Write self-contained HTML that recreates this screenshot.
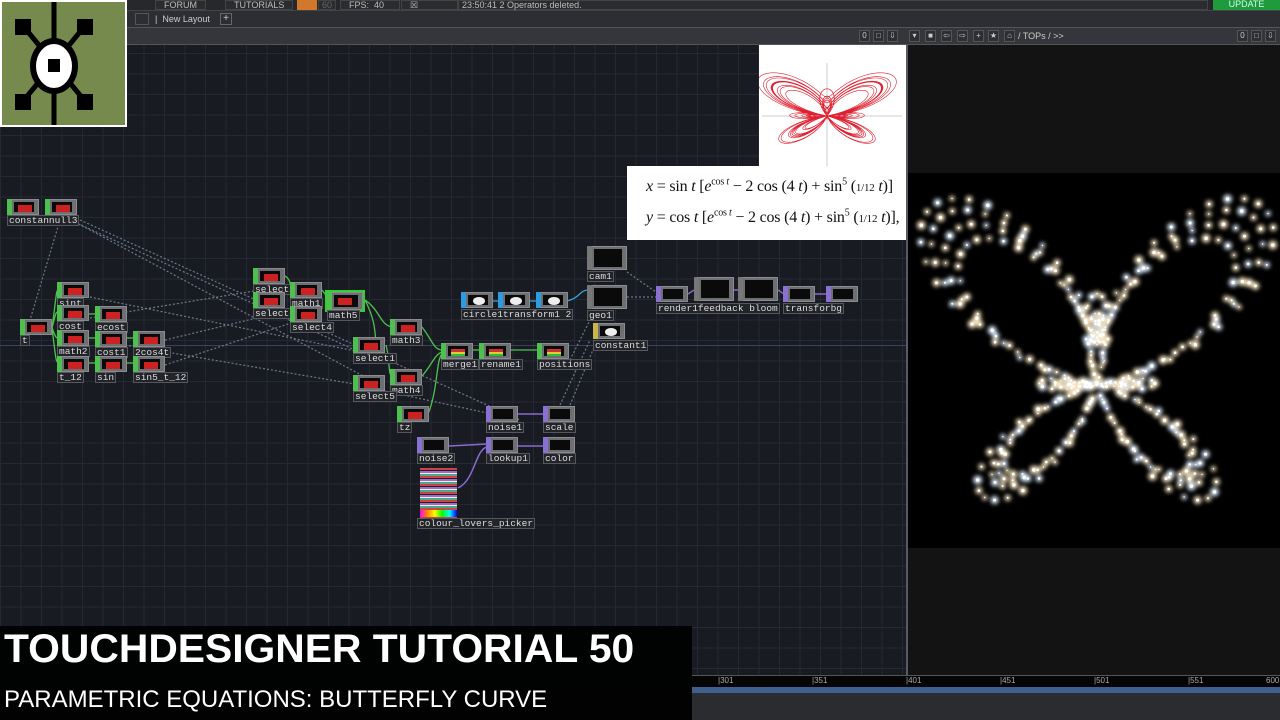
<!DOCTYPE html>
<html><head><meta charset="utf-8">
<style>
*{margin:0;padding:0;box-sizing:border-box}
body{width:1280px;height:720px;overflow:hidden;background:#1b1d24;font-family:"Liberation Sans",sans-serif;position:relative}
.abs{position:absolute}
#grid{left:0;top:45px;width:908px;height:640px;background-color:#191b22;
background-image:linear-gradient(#252932 1px,transparent 1px),linear-gradient(90deg,#252932 1px,transparent 1px);
background-size:20.5px 20.5px;background-position:0 8px}
.bar{left:0;width:1280px}
.tab{position:absolute;top:0;height:10px;color:#bbb;font-size:9px;line-height:9px;border:1px solid #444;padding:0 8px;background:#2a2c30}
.node{position:absolute;background:#6d6f73;border:1px solid #8a8c90}
.node .in{position:absolute;left:-1px;top:-1px;bottom:-1px;width:5px}
.node .v{position:absolute;left:6px;top:2px;right:4px;bottom:2px;background:#0a0a0a}
.lbl{position:absolute;font-family:"Liberation Mono",monospace;font-size:9.5px;color:#ddd;background:#222429;border:1px solid #55575c;line-height:9px;height:11px;padding:0 1px;white-space:nowrap}
.tb{position:absolute;top:30px;width:11px;height:12px;border:1px solid #555;background:#2c2e32;color:#ccc;font-size:8px;text-align:center;line-height:10px}
sup{line-height:0;font-size:10px}
</style></head><body>
<div class="abs bar" style="top:0;height:10px;background:#26282c"></div>
<div class="tab" style="left:155px">FORUM</div>
<div class="tab" style="left:225px">TUTORIALS</div>
<div class="abs" style="left:297px;top:0;width:20px;height:10px;background:#d2782c"></div>
<div class="tab" style="left:318px;padding:0 3px;color:#666">60</div>
<div class="tab" style="left:340px;width:60px">FPS:&nbsp; 40</div>
<div class="tab" style="left:401px;width:57px">☒ Realtime</div>
<div class="tab" style="left:458px;width:750px;padding-left:3px">23:50:41 2 Operators deleted.</div>
<div class="abs" style="left:1213px;top:0;width:67px;height:10px;background:#1f9a3c;color:#cfe;font-size:9px;line-height:9px;text-align:center">UPDATE</div>
<div class="abs bar" style="top:10px;height:18px;background:#2c2e33;border-top:1px solid #444;border-bottom:1px solid #555"></div>
<div class="abs" style="left:135px;top:13px;width:14px;height:12px;border:1px solid #555"></div>
<div class="abs" style="left:155px;top:14px;color:#ccc;font-size:9px">| &nbsp;New Layout</div>
<div class="abs" style="left:220px;top:13px;width:12px;height:12px;border:1px solid #666;color:#ccc;font-size:10px;line-height:10px;text-align:center">+</div>
<div class="abs bar" style="top:28px;height:17px;background:#34363b;border-bottom:1px solid #555"></div>
<div class="tb" style="left:859px">0</div><div class="tb" style="left:873px">□</div><div class="tb" style="left:887px">⇩</div>
<div class="tb" style="left:909px">▾</div><div class="tb" style="left:925px">■</div><div class="tb" style="left:941px">⇦</div><div class="tb" style="left:957px">⇨</div><div class="tb" style="left:973px">+</div><div class="tb" style="left:988px">★</div><div class="tb" style="left:1004px">⌂</div>
<div class="abs" style="left:1018px;top:31px;color:#ccc;font-size:9px">/ TOPs / &gt;&gt;</div>
<div class="tb" style="left:1237px">0</div><div class="tb" style="left:1251px">□</div><div class="tb" style="left:1265px">⇩</div>

<div id="grid" class="abs"></div>
<div class="abs" style="left:0;top:345px;width:908px;height:1px;background:#3d3f66"></div>

<div class="abs" style="left:906px;top:45px;width:2px;height:640px;background:#555a66"></div>
<div class="abs" style="left:908px;top:45px;width:372px;height:630px;background:#131313"></div>
<div class="abs" style="left:908px;top:173px;width:372px;height:375px;background:#000"></div>
<svg class="abs" style="left:908px;top:173px" width="372" height="375" id="bfly">
<defs><filter id="gl" x="-50%" y="-50%" width="200%" height="200%"><feGaussianBlur stdDeviation="2.2"/></filter></defs>
<g id="bg1" filter="url(#gl)"></g><g id="bg2"></g></svg>

<div class="abs" style="left:692px;top:675px;width:588px;height:12px;background:#050505;border-top:1px solid #555;color:#aaa;font-size:8px">
<span class="abs" style="left:26px">|301</span><span class="abs" style="left:120px">|351</span><span class="abs" style="left:214px">|401</span><span class="abs" style="left:308px">|451</span><span class="abs" style="left:402px">|501</span><span class="abs" style="left:496px">|551</span><span class="abs" style="left:574px">600</span></div>
<div class="abs" style="left:692px;top:687px;width:588px;height:6px;background:#3f5f8f"></div>
<div class="abs" style="left:692px;top:693px;width:588px;height:27px;background:#2b2c2f"></div>

<div class="abs" style="left:759px;top:45px;width:147px;height:126px;background:#fff"></div>
<svg class="abs" style="left:759px;top:45px" width="147" height="126"><line x1="3" y1="71" x2="143" y2="71" stroke="#ccc"/><line x1="68" y1="18" x2="68" y2="126" stroke="#ccc"/><g id="red"></g></svg>
<div class="abs" style="left:627px;top:166px;width:279px;height:74px;background:#fff;font-family:'Liberation Serif',serif;font-size:16px;color:#111;padding:6px 0 0 19px;line-height:29px;white-space:nowrap;letter-spacing:-0.2px">
<div><i>x</i> = sin <i>t</i> [<i>e</i><sup>cos <i>t</i></sup> − 2 cos (4 <i>t</i>) + sin<sup>5</sup> (<span style="font-size:11px">1/12</span> <i>t</i>)]</div>
<div><i>y</i> = cos <i>t</i> [<i>e</i><sup>cos <i>t</i></sup> − 2 cos (4 <i>t</i>) + sin<sup>5</sup> (<span style="font-size:11px">1/12</span> <i>t</i>)],</div>
</div>

<svg class="abs" style="left:0;top:0" width="908" height="690" fill="none">
<g stroke="#6a7a8c" stroke-width="1.2" stroke-dasharray="2 2">
<path d="M80 220 L520 420"/><path d="M75 222 L380 385"/><path d="M70 220 L355 350"/><path d="M60 220 L30 320"/>
<path d="M90 318 L260 290"/><path d="M90 297 L360 352"/><path d="M165 340 L290 310"/><path d="M165 365 L300 320"/>
<path d="M125 345 L360 385"/><path d="M380 390 L520 420"/><path d="M627 272 L656 292"/><path d="M627 297 L656 297"/>
<path d="M570 360 L595 310"/><path d="M560 405 L590 340"/><path d="M570 405 L595 345"/>
</g>
<g stroke="#4fc14f" stroke-width="1.3">
<path d="M52 328 C56 300 56 290 58 290"/><path d="M52 328 C56 312 56 312 58 312"/><path d="M52 328 C56 338 56 338 58 338"/><path d="M52 328 C56 360 56 362 58 362"/>
<path d="M88 314 L96 314"/><path d="M88 338 L96 338"/><path d="M88 363 L96 363"/><path d="M126 338 L134 338"/><path d="M126 363 L134 363"/>
<path d="M285 276 C292 280 290 290 292 290"/><path d="M322 290 L328 298"/><path d="M365 300 C380 310 380 325 392 327"/><path d="M365 300 C375 320 375 330 376 345"/>
<path d="M386 345 C390 360 388 375 392 376"/><path d="M422 327 C432 340 434 350 442 350"/><path d="M422 376 C432 365 434 355 442 352"/><path d="M428 414 C438 390 436 360 442 354"/>
<path d="M472 350 L480 350"/><path d="M510 350 L538 350"/></g>
<g stroke="#3aa0d8" stroke-width="1.3"><path d="M490 301 L499 301"/><path d="M528 301 L537 301"/><path d="M567 301 C580 298 580 290 588 290"/></g>
<g stroke="#8a6ad0" stroke-width="1.5"><path d="M517 414 L544 414"/><path d="M449 446 L487 444"/><path d="M517 446 L544 446"/><path d="M458 488 C475 480 475 450 487 447"/>
<path d="M688 294 L694 290"/><path d="M733 290 L739 290"/><path d="M778 290 L784 294"/><path d="M815 294 L827 294"/></g>
</svg>
<div id="nodes"></div>

<div class="abs" style="left:0;top:0;width:127px;height:127px;background:#fff;padding:2px">
<svg width="123" height="123" viewBox="0 0 123 123"><rect width="123" height="123" fill="#758a4c"/>
<g stroke="#000" stroke-width="5"><line x1="52" y1="0" x2="52" y2="123"/><line x1="22" y1="25" x2="82" y2="98"/><line x1="82" y1="25" x2="22" y2="98"/></g>
<rect x="13" y="17" width="16" height="16"/><rect x="75" y="17" width="16" height="16"/><rect x="13" y="92" width="16" height="16"/><rect x="75" y="92" width="16" height="16"/>
<ellipse cx="52" cy="64" rx="24" ry="28" fill="#000"/><ellipse cx="52" cy="64" rx="18" ry="22" fill="#fff"/><rect x="46" y="57" width="12" height="13" fill="#000"/></svg></div>

<div class="abs" style="left:0;top:626px;width:692px;height:94px;background:rgba(0,0,0,0.93)"></div>
<div class="abs" style="left:4px;top:627px;color:#fff;font-size:40px;font-weight:bold;white-space:nowrap;transform:scaleX(1.02);transform-origin:left">TOUCHDESIGNER TUTORIAL 50</div>
<div class="abs" style="left:4px;top:686px;color:#fff;font-size:24px;white-space:nowrap;transform:scaleX(1.0);transform-origin:left">PARAMETRIC EQUATIONS: BUTTERFLY CURVE</div>

<script>
var N=[
[7,199,32,16,'c','constannull3',7,215],[45,199,32,16,'c','',0,0],
[57,282,32,16,'c','sint',57,298],[57,305,32,16,'c','cost',57,321],[95,306,32,16,'c','ecost',95,322],
[20,319,32,16,'c','t',20,335],[57,330,32,16,'c','math2',57,346],[95,331,32,16,'c','cost1',95,347],[133,331,32,16,'c','2cos4t',133,347],
[57,356,32,16,'c','t_12',57,372],[95,356,32,16,'c','sin',95,372],[133,356,32,16,'c','sin5_t_12',133,372],
[253,268,32,16,'c','select2',253,284],[253,292,32,16,'c','select3',253,308],[290,282,32,16,'c','math1',290,298],[290,306,32,16,'c','select4',290,322],
[327,292,36,18,'g','math5',327,310],[390,319,32,16,'c','math3',390,335],[353,337,32,16,'c','select1',353,353],[390,369,32,16,'c','math4',390,385],
[353,375,32,16,'c','select5',353,391],[397,406,32,16,'c','tz',397,422],
[441,343,32,16,'m','merge1',441,359],[479,343,32,16,'m','rename1',479,359],[537,343,32,16,'m','positions',537,359],
[461,292,32,16,'s','circle1transform1 2',461,309],[498,292,32,16,'s','',0,0],[536,292,32,16,'s','',0,0],
[587,246,40,24,'p','cam1',587,271],[587,285,40,24,'p','geo1',587,310],[593,323,32,16,'y','constant1',593,340],
[656,286,32,16,'t','render1feedback bloom',656,303],[694,277,40,24,'p','',0,0],[738,277,40,24,'p','',0,0],[783,286,32,16,'t','transforbg',783,303],[826,286,32,16,'t','',0,0],
[486,406,32,16,'t','noise1',486,422],[543,406,32,16,'t','scale',543,422],[417,437,32,16,'t','noise2',417,453],[486,437,32,16,'t','lookup1',486,453],[543,437,32,16,'t','color',543,453]
];
var col={c:'#4fbf4f',g:'#4fbf4f',m:'#4fbf4f',s:'#2d9be0',p:'#777',y:'#c8b64a',t:'#8a70d0'};
var h='';
N.forEach(function(n){
 var inner='';
 if(n[4]=='c'||n[4]=='g') inner='<div style="position:absolute;left:4px;top:3px;width:14px;height:7px;background:#c22"></div>';
 if(n[4]=='m') inner='<div style="position:absolute;left:3px;top:3px;right:3px;height:3px;background:#c33"></div><div style="position:absolute;left:3px;top:6px;right:3px;height:2px;background:#dc3"></div><div style="position:absolute;left:3px;top:8px;right:3px;height:2px;background:#3b3"></div>';
 if(n[4]=='s'||n[4]=='y') inner='<div style="position:absolute;left:5px;top:2px;width:12px;height:8px;border-radius:50%;background:#eee"></div>';
 h+='<div class="node" style="left:'+n[0]+'px;top:'+n[1]+'px;width:'+n[2]+'px;height:'+n[3]+'px;'+(n[4]=='g'?'outline:2px solid #2fd02f;':'')+'"><div class="in" style="background:'+col[n[4]]+'"></div><div class="v">'+inner+'</div></div>';
 if(n[5]) h+='<div class="lbl" style="left:'+n[6]+'px;top:'+n[7]+'px">'+n[5]+'</div>';
});
h+='<div style="position:absolute;left:420px;top:468px;width:37px;height:50px;background:#222;background-image:repeating-linear-gradient(0deg,#c44 0 2px,#4a8 2px 4px,#eee 4px 5px,#a6c 5px 7px,#222 7px 8px)"></div><div style="position:absolute;left:420px;top:510px;width:37px;height:7px;background:linear-gradient(90deg,#f0f,#f80,#ff0,#0f0,#0ff,#00f)"></div><div class="lbl" style="left:417px;top:518px">colour_lovers_picker</div>';
document.getElementById('nodes').innerHTML=h;
function f(t){return Math.exp(Math.cos(t))-2*Math.cos(4*t)+Math.pow(Math.sin(t/12),5);}
var g1='',g2='',rd='M';
var K=[1,0.88,0.76,0.95];
for(var k=0;k<4;k++){
 for(var i=0;i<110;i++){var t=i*2*Math.PI/110+k*0.03,r=(Math.exp(Math.cos(t))-2*Math.cos(4*t))*K[k]+0.15*k,x=Math.sin(t)*r,y=Math.cos(t)*r;
  var px=189+x*57,py=212-y*56;
  var s=1+2*(((i+k)*7)%5)/5;var c=(i%3==0)?'#dfeeff':'#f6e4c0';
  g1+='<circle cx="'+px.toFixed(1)+'" cy="'+py.toFixed(1)+'" r="'+(s+1.8).toFixed(1)+'" fill="'+c+'"/>';g2+='<circle cx="'+px.toFixed(1)+'" cy="'+py.toFixed(1)+'" r="'+(s*0.7).toFixed(1)+'" fill="#fff"/>';
 }}
document.getElementById('bg1').innerHTML=g1;document.getElementById('bg2').innerHTML=g2;
for(var i=0;i<=2000;i++){var t=i*24*Math.PI/2000,r=f(t);rd+=(68+Math.sin(t)*r*19).toFixed(1)+' '+(71-Math.cos(t)*r*11).toFixed(1)+' ';}
document.getElementById('red').innerHTML='<path d="'+rd+'" fill="none" stroke="#e02030" stroke-width="0.6"/>';
</script>
</body></html>
